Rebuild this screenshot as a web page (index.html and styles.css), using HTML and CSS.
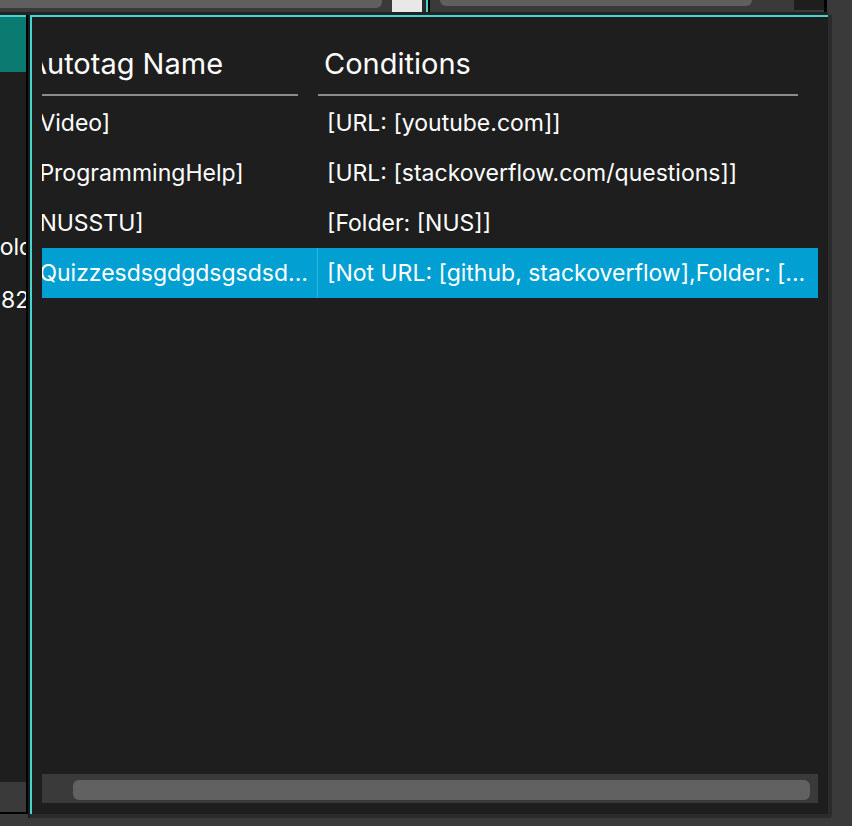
FILE: index.html
```html
<!DOCTYPE html>
<html>
<head>
<meta charset="utf-8">
<link rel="stylesheet" href="styles.css">
</head>
<body>
<div class="screen">
  <div class="top">
    <div class="t-track1"><div class="t-thumb1"></div></div>
    <div class="t-light"></div>
    <div class="t-dark"></div>
    <div class="t-cyan"></div>
    <div class="t-black"></div>
    <div class="t-track2"><div class="t-thumb2"></div></div>
    <div class="t-box"></div>
    <div class="t-black2"></div>
  </div>
  <div class="top-gap"></div>
  <div class="main">
    <div class="leftpanel">
      <div class="lp-cyan"></div>
      <div class="lp-teal"></div>
      <div class="lp-body">
        <div class="lp-line lp-l1">Folder</div>
        <div class="lp-line lp-l2">82</div>
      </div>
      <div class="lp-foot"></div>
    </div>
    <div class="win-frame">
      <div class="win">
        <div class="table-clip">
          <div class="table">
            <div class="hrow">
              <div class="hcell c1"><span class="htext">Autotag Name</span></div>
              <div class="hcell c2"><span class="htext">Conditions</span></div>
            </div>
            <div class="row">
              <div class="cell c1">[Video]</div>
              <div class="cell c2">[URL: [youtube.com]]</div>
            </div>
            <div class="row">
              <div class="cell c1">[ProgrammingHelp]</div>
              <div class="cell c2">[URL: [stackoverflow.com/questions]]</div>
            </div>
            <div class="row">
              <div class="cell c1">[NUSSTU]</div>
              <div class="cell c2">[Folder: [NUS]]</div>
            </div>
            <div class="row selected">
              <div class="cell c1">[Quizzesdsgdgdsgsdsd...</div>
              <div class="cell c2">[Not URL: [github, stackoverflow],Folder: [...</div>
            </div>
          </div>
        </div>
        <div class="hscroll"><div class="hthumb"></div></div>
      </div>
    </div>
  </div>
</div>
</body>
</html>
```
FILE: styles.css
```css
* { box-sizing: border-box; }
html, body { margin: 0; padding: 0; }
body {
  background: #3a3a3a;
  font-family: "Inter", "Noto Sans", sans-serif;
  color: #ffffff;
  width: 852px;
  height: 826px;
  overflow: hidden;
}
.screen { width: 852px; height: 826px; }

.top { display: flex; height: 12px; }
.t-track1 { width: 392px; background: #3a3a3a; }
.t-thumb1 { width: 382px; height: 8px; background: #5f5f5f; border-radius: 0 0 6px 0; }
.t-light { width: 30px; background: #e8e8e8; }
.t-dark { width: 4px; background: #2a2a2a; }
.t-cyan { width: 2px; background: #45d4cf; }
.t-black { width: 2px; background: #000; }
.t-track2 { width: 364px; background: #3a3a3a; padding-left: 10px; }
.t-thumb2 { width: 312px; height: 6px; background: #5f5f5f; border-radius: 0 0 6px 6px; }
.t-box { width: 30px; height: 10px; background: #1e1e1e; }
.t-black2 { width: 3px; background: #000; }

.top-gap { width: 828px; height: 3px; background: #222222; }

.main { display: flex; height: 803px; }

.leftpanel {
  width: 28px;
  height: 799px;
  display: flex;
  flex-direction: column;
  border-right: 2px solid #000;
  border-bottom: 2px solid #000;
  overflow: hidden;
}
.lp-cyan { height: 2px; background: #45d4cf; }
.lp-teal { height: 55px; background: #0b7a70; }
.lp-body { flex: 1; background: #1e1e1e; padding-top: 162px; overflow: hidden; }
.lp-foot { height: 30px; background: #3a3a3a; }
.lp-line { font-size: 23px; line-height: 26px; white-space: nowrap; }
.lp-l1 { margin-left: -13px; }
.lp-l2 { margin-left: 1px; margin-top: 27px; }

.win-frame {
  width: 804px;
  height: 803px;
  background: #2b2b2b;
  border-left: 2px solid #1c1c1c;
  padding: 0 4px 4px 0;
  border-radius: 0 0 4px 0;
}
.win {
  width: 798px;
  height: 799px;
  background: #1e1e1e;
  border-top: 2px solid #45d4cf;
  border-left: 2px solid #45d4cf;
  padding: 0 10px 11px 10px;
  display: flex;
  flex-direction: column;
}
.table-clip { height: 757px; overflow: hidden; }
.table { margin-left: -20px; width: 796px; }

.hrow { display: flex; height: 81px; }
.hcell {
  padding-top: 30px;
  margin-right: 20px;
  border-bottom: 2px solid #8c8c8c;
  height: 79px;
  font-size: 29px;
  line-height: 34px;
  padding-left: 5px;
  white-space: nowrap;
}
.hcell.c1 { width: 276px; }
.hcell.c2 { width: 480px; padding-left: 6px; }

.row { display: flex; height: 50px; align-items: center; font-size: 23px; }
.cell { padding-left: 9px; white-space: nowrap; overflow: hidden; height: 50px; line-height: 50px; }
.cell.c1 { width: 296px; }
.cell.c2 { width: 500px; }
.row.selected { background: #029fd3; }
.row.selected .cell.c1 { border-right: 1px solid #2fb3df; }

.hscroll {
  height: 29px;
  background: #3a3a3a;
  padding: 6px 8px 3px 31px;
}
.hthumb { height: 20px; background: #616161; border-radius: 6px; }
```
